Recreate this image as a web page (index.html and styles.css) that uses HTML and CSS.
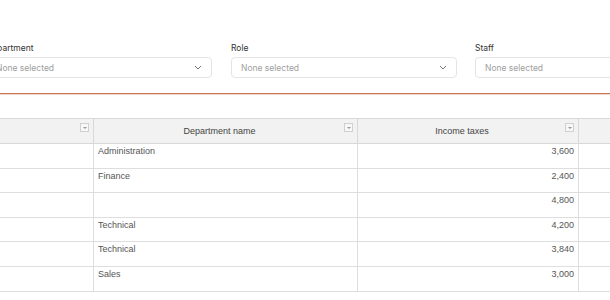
FILE: index.html
```html
<!DOCTYPE html>
<html lang="en">
<head>
    <meta charset="UTF-8">
    <meta name="viewport" content="width=device-width, initial-scale=1.0">
    <title>Payroll</title>
    <link rel="stylesheet" href="styles.css">
</head>
<body>
    <div class="page">
        <div class="filters">
            <div class="field">
                <div class="field-label">Department</div>
                <div class="select">
                    <span class="placeholder">None selected</span>
                    <svg class="chevron" width="8" height="5" viewBox="0 0 8 5"><path d="M1 1 L4 4 L7 1" fill="none" stroke="#777" stroke-width="1"/></svg>
                </div>
            </div>
            <div class="field field-mid">
                <div class="field-label">Role</div>
                <div class="select">
                    <span class="placeholder">None selected</span>
                    <svg class="chevron" width="8" height="5" viewBox="0 0 8 5"><path d="M1 1 L4 4 L7 1" fill="none" stroke="#777" stroke-width="1"/></svg>
                </div>
            </div>
            <div class="field">
                <div class="field-label">Staff</div>
                <div class="select">
                    <span class="placeholder">None selected</span>
                    <svg class="chevron" width="8" height="5" viewBox="0 0 8 5"><path d="M1 1 L4 4 L7 1" fill="none" stroke="#777" stroke-width="1"/></svg>
                </div>
            </div>
        </div>

        <div class="divider"></div>

        <table class="grid">
            <colgroup>
                <col class="col-id">
                <col class="col-dept">
                <col class="col-tax">
                <col class="col-rest">
            </colgroup>
            <thead>
                <tr>
                    <th><span class="th-text"></span><span class="filter-btn"></span></th>
                    <th><span class="th-text">Department name</span><span class="filter-btn"></span></th>
                    <th><span class="th-text">Income taxes</span><span class="filter-btn"></span></th>
                    <th></th>
                </tr>
            </thead>
            <tbody>
                <tr><td></td><td>Administration</td><td class="num">3,600</td><td></td></tr>
                <tr><td></td><td>Finance</td><td class="num">2,400</td><td></td></tr>
                <tr><td></td><td></td><td class="num">4,800</td><td></td></tr>
                <tr><td></td><td>Technical</td><td class="num">4,200</td><td></td></tr>
                <tr><td></td><td>Technical</td><td class="num">3,840</td><td></td></tr>
                <tr><td></td><td>Sales</td><td class="num">3,000</td><td></td></tr>
            </tbody>
        </table>
    </div>
</body>
</html>
```

FILE: styles.css
```css
* {
    margin: 0;
    padding: 0;
    box-sizing: border-box;
}

body {
    background: #fff;
    font-family: 'Liberation Sans', Arial, sans-serif;
    color: #555;
    overflow: hidden;
}

.page {
    margin-left: -14px;
    width: 720px;
}

.filters {
    display: flex;
    gap: 18px;
    padding-top: 43px;
}

.field {
    width: 226px;
}

.field-mid {
    margin-left: 1px;
}

.field-label {
    font-family: Inter, 'Noto Sans', sans-serif;
    font-size: 8.5px;
    line-height: 10px;
    color: #333;
    margin-bottom: 4px;
}

.select {
    height: 21px;
    border: 1px solid #e4e4e4;
    border-radius: 4px;
    padding: 0 9px;
    display: flex;
    align-items: center;
    justify-content: space-between;
}

.placeholder {
    font-family: Inter, 'Noto Sans', sans-serif;
    font-size: 8.5px;
    color: #a0a0a0;
}

.divider {
    margin-top: 15px;
    border-top: 1px solid #c7764f;
    border-bottom: 1px solid #f0d8ca;
}

.grid {
    margin-top: 23px;
    border-collapse: collapse;
    table-layout: fixed;
    width: 720px;
    font-size: 9px;
}

.col-id { width: 107px; }
.col-dept { width: 264px; }
.col-tax { width: 221px; }
.col-rest { width: 128px; }

.grid th {
    position: relative;
    height: 25px;
    background: #f2f2f2;
    border: 1px solid #d8d8d8;
    font-weight: normal;
    color: #444;
    padding: 0 4px;
}

.th-text {
    display: block;
    text-align: center;
    padding-right: 12px;
}

.filter-btn {
    position: absolute;
    right: 4px;
    top: 4px;
    width: 9px;
    height: 9px;
    border: 1px solid #d0d0d0;
    background: #f7f7f7;
}

.filter-btn::after {
    content: "";
    position: absolute;
    left: 2px;
    top: 3px;
    border-left: 2px solid transparent;
    border-right: 2px solid transparent;
    border-top: 2px solid #999;
}

.grid td {
    height: 24.6px;
    border: 1px solid #dedede;
    vertical-align: top;
    padding: 2px 4px 0;
    color: #555;
}

.grid td.num {
    text-align: right;
}
```
